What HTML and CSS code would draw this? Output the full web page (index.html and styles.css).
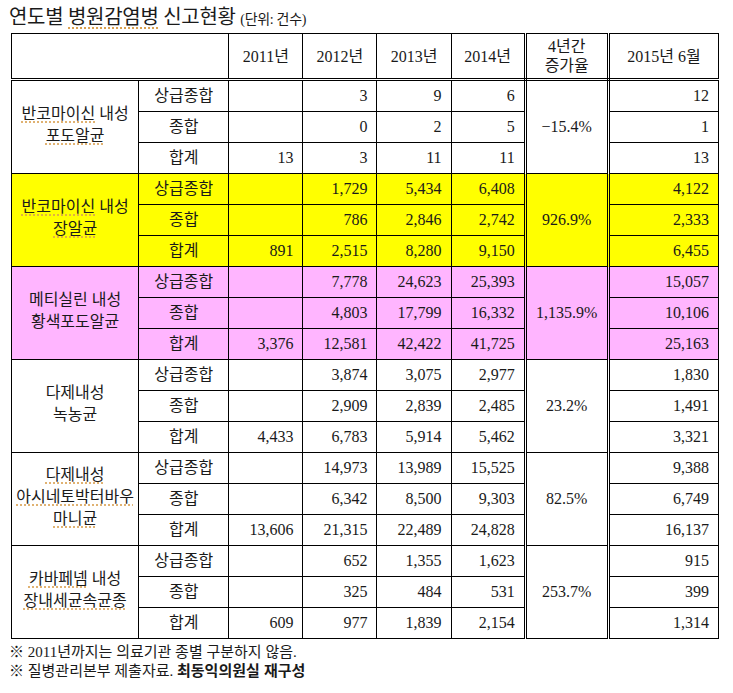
FILE: index.html
```html
<!DOCTYPE html>
<html lang="ko">
<head>
<meta charset="utf-8">
<title>연도별 병원감염병 신고현황</title>
<link rel="stylesheet" href="styles.css">
</head>
<body>
<div class="page">
  <h1 class="title">연도별 <span class="sq">병원감염병</span> 신고현황 <span class="unit">(단위: 건수)</span></h1>
  <table class="grid">
    <colgroup>
      <col class="c-name"><col class="c-type"><col class="c-y"><col class="c-y"><col class="c-y"><col class="c-y"><col class="c-g"><col class="c-last">
    </colgroup>
    <thead>
      <tr>
        <th colspan="2"></th>
        <th>2011년</th><th>2012년</th><th>2013년</th><th class="dl">2014년</th>
        <th class="dl">4년간<br>증가율</th><th>2015년 6월</th>
      </tr>
    </thead>
    <tbody>
      <tr>
        <td rowspan="3" class="name"><span class="sq">반코마이신</span> 내성<br><span class="sq">포도알균</span></td>
        <td class="type">상급종합</td><td></td><td>3</td><td>9</td><td class="dl">6</td>
        <td rowspan="3" class="dl growth">−15.4%</td><td>12</td>
      </tr>
      <tr><td class="type">종합</td><td></td><td>0</td><td>2</td><td class="dl">5</td><td>1</td></tr>
      <tr><td class="type">합계</td><td>13</td><td>3</td><td>11</td><td class="dl">11</td><td>13</td></tr>

      <tr class="yellow">
        <td rowspan="3" class="name"><span class="sq">반코마이신</span> 내성<br><span class="sq">장알균</span></td>
        <td class="type">상급종합</td><td></td><td>1,729</td><td>5,434</td><td class="dl">6,408</td>
        <td rowspan="3" class="dl growth">926.9%</td><td>4,122</td>
      </tr>
      <tr class="yellow"><td class="type">종합</td><td></td><td>786</td><td>2,846</td><td class="dl">2,742</td><td>2,333</td></tr>
      <tr class="yellow"><td class="type">합계</td><td>891</td><td>2,515</td><td>8,280</td><td class="dl">9,150</td><td>6,455</td></tr>

      <tr class="pink">
        <td rowspan="3" class="name">메티실린 내성<br>황색포도알균</td>
        <td class="type">상급종합</td><td></td><td>7,778</td><td>24,623</td><td class="dl">25,393</td>
        <td rowspan="3" class="dl growth">1,135.9%</td><td>15,057</td>
      </tr>
      <tr class="pink"><td class="type">종합</td><td></td><td>4,803</td><td>17,799</td><td class="dl">16,332</td><td>10,106</td></tr>
      <tr class="pink"><td class="type">합계</td><td>3,376</td><td>12,581</td><td>42,422</td><td class="dl">41,725</td><td>25,163</td></tr>

      <tr>
        <td rowspan="3" class="name">다제내성<br>녹농균</td>
        <td class="type">상급종합</td><td></td><td>3,874</td><td>3,075</td><td class="dl">2,977</td>
        <td rowspan="3" class="dl growth">23.2%</td><td>1,830</td>
      </tr>
      <tr><td class="type">종합</td><td></td><td>2,909</td><td>2,839</td><td class="dl">2,485</td><td>1,491</td></tr>
      <tr><td class="type">합계</td><td>4,433</td><td>6,783</td><td>5,914</td><td class="dl">5,462</td><td>3,321</td></tr>

      <tr>
        <td rowspan="3" class="name"><span class="sq">다제내성</span><br><span class="sq">아시네토박터바우</span><br><span class="sq">마니균</span></td>
        <td class="type">상급종합</td><td></td><td>14,973</td><td>13,989</td><td class="dl">15,525</td>
        <td rowspan="3" class="dl growth">82.5%</td><td>9,388</td>
      </tr>
      <tr><td class="type">종합</td><td></td><td>6,342</td><td>8,500</td><td class="dl">9,303</td><td>6,749</td></tr>
      <tr><td class="type">합계</td><td>13,606</td><td>21,315</td><td>22,489</td><td class="dl">24,828</td><td>16,137</td></tr>

      <tr>
        <td rowspan="3" class="name"><span class="sq">카바페넴</span> 내성<br><span class="sq">장내세균속균종</span></td>
        <td class="type">상급종합</td><td></td><td>652</td><td>1,355</td><td class="dl">1,623</td>
        <td rowspan="3" class="dl growth">253.7%</td><td>915</td>
      </tr>
      <tr><td class="type">종합</td><td></td><td>325</td><td>484</td><td class="dl">531</td><td>399</td></tr>
      <tr><td class="type">합계</td><td>609</td><td>977</td><td>1,839</td><td class="dl">2,154</td><td>1,314</td></tr>
    </tbody>
  </table>
  <p class="note">※ 2011년까지는 의료기관 종별 구분하지 않음.</p>
  <p class="note">※ 질병관리본부 제출자료. <b class="src">최동익의원실 재구성</b></p>
</div>
</body>
</html>
```

FILE: styles.css
```css
html, body {
  margin: 0;
  padding: 0;
  background: #ffffff;
}
body {
  font-family: "Liberation Serif", "Noto Sans CJK KR", serif;
  color: #1a1a1a;
}
.page {
  padding: 4px 0 0 9px;
}
.title {
  margin: 0;
  font-size: 20px;
  font-weight: normal;
  line-height: 26px;
  height: 29px;
  letter-spacing: -0.3px;
}
.title .unit {
  font-size: 14px;
}
.sq {
  text-decoration: underline dotted #d9a050;
  text-underline-offset: 3px;
}
.grid {
  margin-left: 2px;
  border-collapse: collapse;
  table-layout: fixed;
  width: 708px;
  font-size: 16px;
}
.c-name { width: 127px; }
.c-type { width: 90px; }
.c-y { width: 74px; }
.c-g { width: 83px; }
.c-last { width: 110px; }
.grid th, .grid td {
  border: 1px solid #000;
  padding: 0 9px 0 4px;
  height: 30px;
  line-height: 20px;
  text-align: right;
  font-weight: normal;
  white-space: nowrap;
}
.grid thead th {
  height: 44px;
  text-align: center;
  padding: 0;
  line-height: 19px;
  border-bottom: 3px double #000;
}
.grid .dl {
  border-right: 3px double #000;
}
.grid td.type {
  text-align: center;
  padding: 0;
}
.grid td.name {
  text-align: center;
  padding: 0 0 4px 0;
  line-height: 22px;
  white-space: nowrap;
}
.grid td.growth {
  text-align: center;
  padding: 0;
}
.yellow td { background: #ffff00; }
.pink td { background: #ffb5ff; }
.note {
  margin: 0;
  font-size: 15px;
  line-height: 18px;
  padding-left: 0;
}
.note:first-of-type {
  margin-top: 4px;
}
.src {
  font-family: "Noto Sans CJK KR", sans-serif;
  font-weight: bold;
}
```
